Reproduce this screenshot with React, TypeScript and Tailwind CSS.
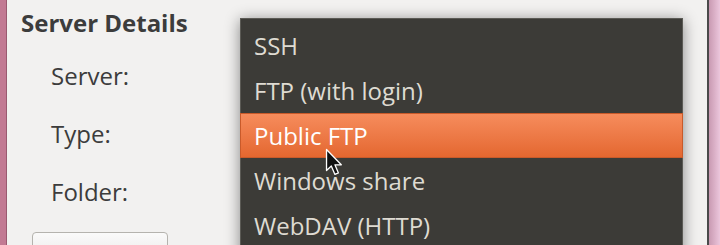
import React from "react";

const items = ["SSH", "FTP (with login)", "Public FTP", "Windows share", "WebDAV (HTTP)"];

function Cursor() {
  return (
    <svg width="19" height="29" viewBox="0 0 13 20" className="absolute left-[318px] top-[148px]">
      <path d="M1 1 L1 15.5 L4.3 12.4 L6.8 18.2 L9.2 17.2 L6.8 11.6 L11.2 11.6 Z" fill="#111" stroke="#fff" strokeWidth="0.9" strokeLinejoin="round" />
    </svg>
  );
}

export default function App() {
  return (
    <div className="w-[720px] h-[245px] flex overflow-hidden" style={{ fontFamily: '"Open Sans", "DejaVu Sans", sans-serif' }}>
      <div className="w-[7px] h-full bg-[#c27a93] border-r border-[#9a5a70]" />
      <div className="flex-1 h-full bg-[#f2f1f0] relative">
        <div className="pl-[14px] pt-[9px] text-[#3c3c3c]">
          <div className="text-[24px] font-bold leading-[28px]">Server Details</div>
          <div className="pl-[30px] flex flex-col text-[24px]">
            <div className="mt-[25px] leading-[28px]">Server:</div>
            <div className="mt-[30px] leading-[28px]">Type:</div>
            <div className="mt-[30px] leading-[28px]">Folder:</div>
          </div>
          <div className="ml-[11px] mt-[26px] w-[136px] h-[30px] rounded-[4px] border border-[#b5b3ae] bg-gradient-to-b from-[#fafafa] to-[#ebeae8]" />
        </div>

        <div className="absolute left-[233px] top-[18px] w-[443px] h-[240px] bg-[#3c3b37] border border-[#5b5a55] shadow-[0_2px_14px_rgba(0,0,0,0.45)] text-[24px] text-[#dfdbd2]">
          <div className="pt-[4px] flex flex-col">
            {items.map((it, i) => (
              <div
                key={it}
                className={
                  i === 2
                    ? "h-[45px] flex items-center pl-[13px] text-white bg-gradient-to-b from-[#f68c5c] to-[#e4672f] border border-[#c95a2a] -mx-px"
                    : "h-[45px] flex items-center pl-[13px]"
                }
              >
                {it}
              </div>
            ))}
          </div>
        </div>
        <Cursor />
      </div>
      <div className="w-[13px] h-full border-l-2 border-[#4a4a4a] bg-gradient-to-r from-[#c99ab2] to-[#ecc6dc]" />
    </div>
  );
}
